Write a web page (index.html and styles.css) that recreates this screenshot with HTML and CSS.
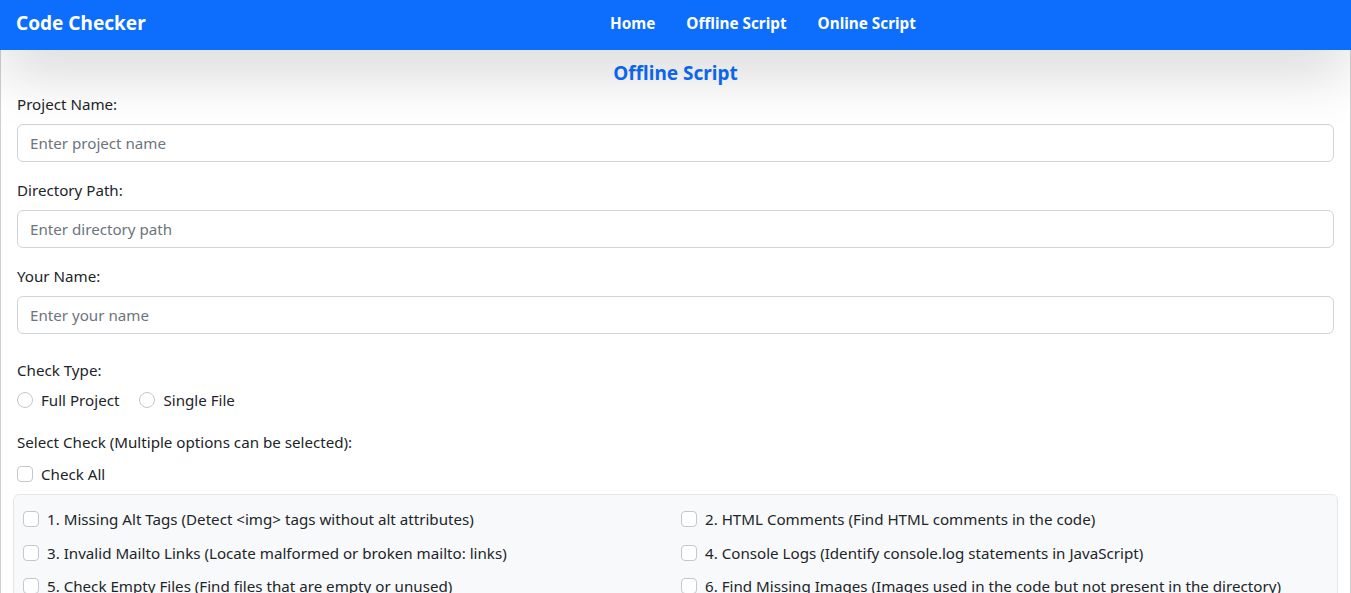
FILE: index.html
```html
<!DOCTYPE html>
<html lang="en">
<head>
<meta charset="utf-8">
<title>Code Checker</title>
<link rel="stylesheet" href="styles.css">
</head>
<body>
<nav class="navbar">
  <a class="brand" href="#">Code Checker</a>
  <ul class="nav-links">
    <li><a href="#">Home</a></li>
    <li><a href="#">Offline Script</a></li>
    <li><a href="#">Online Script</a></li>
  </ul>
</nav>
<main class="container">
  <h2 class="title">Offline Script</h2>
  <form class="form">
    <div class="field">
      <label class="label" for="pn">Project Name:</label>
      <input class="input" id="pn" type="text" placeholder="Enter project name">
    </div>
    <div class="field">
      <label class="label" for="dp">Directory Path:</label>
      <input class="input" id="dp" type="text" placeholder="Enter directory path">
    </div>
    <div class="field">
      <label class="label" for="yn">Your Name:</label>
      <input class="input" id="yn" type="text" placeholder="Enter your name">
    </div>
    <div class="group check-type">
      <div class="label">Check Type:</div>
      <div class="radios">
        <label class="opt"><input type="radio" name="ct" class="radio"> Full Project</label>
        <label class="opt"><input type="radio" name="ct" class="radio"> Single File</label>
      </div>
    </div>
    <div class="group select-check">
      <div class="label">Select Check (Multiple options can be selected):</div>
      <label class="opt check-all"><input type="checkbox" class="checkbox"> Check All</label>
    </div>
    <div class="checks">
      <label class="opt"><input type="checkbox" class="checkbox"> 1. Missing Alt Tags (Detect &lt;img&gt; tags without alt attributes)</label>
      <label class="opt"><input type="checkbox" class="checkbox"> 2. HTML Comments (Find HTML comments in the code)</label>
      <label class="opt"><input type="checkbox" class="checkbox"> 3. Invalid Mailto Links (Locate malformed or broken mailto: links)</label>
      <label class="opt"><input type="checkbox" class="checkbox"> 4. Console Logs (Identify console.log statements in JavaScript)</label>
      <label class="opt"><input type="checkbox" class="checkbox"> 5. Check Empty Files (Find files that are empty or unused)</label>
      <label class="opt"><input type="checkbox" class="checkbox"> 6. Find Missing Images (Images used in the code but not present in the directory)</label>
    </div>
  </form>
</main>
</body>
</html>
```
FILE: styles.css
```css
html { overflow: hidden; }
* { box-sizing: border-box; }
body {
  margin: 0;
  font-family: "Noto Sans", "Open Sans", sans-serif;
  font-size: 15.15px;
  color: #212529;
  background: #fff;
}
.navbar {
  position: relative;
  z-index: 2;
  height: 50px;
  background: #0d6efd;
  display: flex;
  align-items: center;
  padding: 0 16px 4px;
  box-shadow: 0 20px 60px rgba(0, 0, 0, 0.18);
}
.brand {
  color: #fff;
  text-decoration: none;
  font-weight: 700;
  font-size: 19px;
  width: 594px;
}
.nav-links {
  list-style: none;
  display: flex;
  gap: 31px;
  margin: 0;
  padding: 0;
}
.nav-links a {
  color: #fff;
  text-decoration: none;
  font-weight: 700;
  font-size: 15.3px;
}
.container {
  position: relative;
  z-index: 1;
  background: #fff;
  border-left: 1px solid #cfcfcf;
  border-right: 1px solid #cfcfcf;
  padding: 10px 16px 20px;
  min-height: 560px;
}
.title {
  margin: 0;
  text-align: center;
  color: #0d6efd;
  font-size: 19px;
  font-weight: 700;
  line-height: 26px;
}
.form { margin-top: 6px; }
.field { margin-bottom: 16px; }
.label {
  display: block;
  line-height: 24px;
  margin-bottom: 8px;
}
.input {
  display: block;
  width: 100%;
  height: 38px;
  padding: 6px 12px;
  font: inherit;
  color: #212529;
  border: 1px solid #ced4da;
  border-radius: 6px;
  background: #fff;
}
.input::placeholder { color: #6c757d; }
.check-type { margin-top: 24px; }
.check-type .label { margin-bottom: 6px; }
.radios { display: flex; gap: 20px; }
.opt {
  display: flex;
  align-items: center;
  gap: 8px;
  line-height: 24px;
}
.radio, .checkbox {
  appearance: none;
  -webkit-appearance: none;
  width: 16px;
  height: 16px;
  margin: 0;
  border: 1px solid #c4c8cc;
  background: #fff;
  flex: none;
}
.radio { border-radius: 50%; }
.checkbox { border-radius: 4px; }
.select-check { margin-top: 18px; }
.select-check .label { margin-bottom: 8px; }
.checks {
  margin: 8px -4px 0;
  background: #f8f9fa;
  border: 1px solid #e5e7ea;
  border-radius: 6px;
  padding: 12px 9px;
  display: grid;
  grid-template-columns: 658px 1fr;
  row-gap: 9.5px;
}
.checks .opt { gap: 8px; }
```
